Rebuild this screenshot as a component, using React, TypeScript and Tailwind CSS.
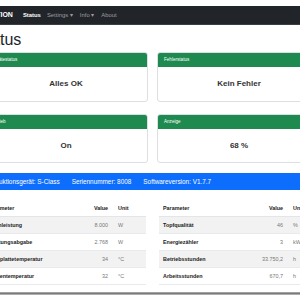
import React from 'react';

const cards = [
  [
    { title: 'Gerätestatus', value: 'Alles OK' },
    { title: 'Fehlerstatus', value: 'Kein Fehler' },
  ],
  [
    { title: 'Betrieb', value: 'On' },
    { title: 'Anzeige', value: '68 %' },
  ],
];

const leftRows = [
  ['Nennleistung', '8.000', 'W'],
  ['Leistungsabgabe', '2.768', 'W'],
  ['Kühlplattetemperatur', '34', '°C'],
  ['Spulentemperatur', '32', '°C'],
];

const rightRows = [
  ['Topfqualität', '46', '%'],
  ['Energiezähler', '3', 'kWh'],
  ['Betriebsstunden', '33.750,2', 'h'],
  ['Arbeitsstunden', '670,7', 'h'],
];

function Card({ title, value, bodyH }: { title: string; value: string; bodyH: string }) {
  return (
    <div className="rounded-[3px] border border-[#dcdfe3] overflow-hidden bg-white">
      <div className="h-[14px] bg-[#1e8a4f] text-white text-[4.6px] flex items-center pl-[6px]">{title}</div>
      <div className={`${bodyH} flex items-center justify-center text-[8px] font-bold text-[#333]`}>{value}</div>
    </div>
  );
}

function DataTable({ rows }: { rows: string[][] }) {
  return (
    <div className="text-[5.4px]">
      <div className="h-[17px] grid grid-cols-[1fr_auto_28px] items-center font-bold text-[#222] border-b border-[#e3e5e8]">
        <span className="pl-[4px]">Parameter</span>
        <span className="pr-[10px] text-right">Value</span>
        <span>Unit</span>
      </div>
      {rows.map((r, i) => (
        <div
          key={r[0]}
          className={`h-[17px] grid grid-cols-[1fr_auto_28px] items-center border-b border-[#e8eaed] ${i % 2 === 0 ? 'bg-[#f2f2f2]' : 'bg-white'}`}
        >
          <span className="pl-[4px] font-bold text-[#222]">{r[0]}</span>
          <span className="pr-[10px] text-right text-[#777]">{r[1]}</span>
          <span className="text-[#777]">{r[2]}</span>
        </div>
      ))}
    </div>
  );
}

export default function App() {
  return (
    <div className="w-[300px] h-[300px] overflow-hidden bg-white font-['Liberation_Sans',Arial,sans-serif]">
      <div className="h-[6px]" />
      <nav className="h-[19px] bg-[#212529] border-b border-[#3a3f44] flex items-center text-[5.9px] whitespace-nowrap">
        <span className="-ml-[26px] text-white font-bold text-[7px]">INDUKTION</span>
        <span className="ml-[10px] text-white font-bold">Status</span>
        <span className="ml-[6px] text-[#9a9da1]">Settings ▾</span>
        <span className="ml-[7px] text-[#9a9da1]">Info ▾</span>
        <span className="ml-[7px] text-[#9a9da1]">About</span>
      </nav>

      <div className="-ml-[16px] w-[337px]">
        <h1 className="-ml-[8px] mt-[5px] text-[16px] leading-[19px] font-medium text-[#212529]">Status</h1>

        <div className="mt-[3px] flex flex-col gap-[12px]">
          {cards.map((row, i) => (
            <div key={i} className="grid grid-cols-2 gap-[9px]">
              {row.map((c) => (
                <Card key={c.title} title={c.title} value={c.value} bodyH={i === 0 ? 'h-[34px]' : 'h-[33px]'} />
              ))}
            </div>
          ))}
        </div>
      </div>

      <div className="mt-[10px] h-[17px] bg-[#0d6efd] flex items-center text-white text-[6.4px] whitespace-nowrap">
        <span className="-ml-[10px]">Induktionsgerät: S-Class</span>
        <span className="ml-[12px]">Seriennummer: 8008</span>
        <span className="ml-[12px]">Softwareversion: V1.7.7</span>
      </div>

      <div className="-ml-[16px] w-[337px] mt-[10px] grid grid-cols-2 gap-[13px]">
        <DataTable rows={leftRows} />
        <DataTable rows={rightRows} />
      </div>

      <div className="mt-[7px] h-[3px] bg-gradient-to-b from-[#b5b5b5] via-[#7a7a7a] to-[#c8c8c8]" />
    </div>
  );
}
